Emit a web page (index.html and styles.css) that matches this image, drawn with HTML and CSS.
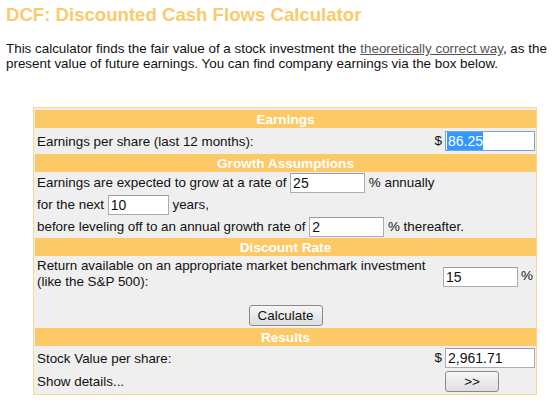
FILE: index.html
```html
<!DOCTYPE html>
<html>
<head>
<meta charset="utf-8">
<title>DCF: Discounted Cash Flows Calculator</title>
<link rel="stylesheet" href="styles.css">
</head>
<body>
<h1 class="title">DCF: Discounted Cash Flows Calculator</h1>
<p class="intro">This calculator finds the fair value of a stock investment the <a class="link" href="#">theoretically correct way</a>, as the present value of future earnings. You can find company earnings via the box below.</p>

<table class="calc">
  <tr class="hrow"><th colspan="2" class="hdr">Earnings</th></tr>
  <tr class="row-eps">
    <td class="label">Earnings per share (last 12 months):</td>
    <td class="val"><span class="cur">$</span><span class="inp inp-wide focused"><span class="sel">86.25</span></span></td>
  </tr>
  <tr class="hrow"><th colspan="2" class="hdr">Growth Assumptions</th></tr>
  <tr class="row-g">
    <td colspan="2" class="label">Earnings are expected to grow at a rate of <input class="inp inp-mid" value="25"> % annually</td>
  </tr>
  <tr class="row-g">
    <td colspan="2" class="label">for the next <input class="inp inp-small" value="10"> years,</td>
  </tr>
  <tr class="row-g">
    <td colspan="2" class="label">before leveling off to an annual growth rate of <input class="inp inp-mid" value="2"> % thereafter.</td>
  </tr>
  <tr class="hrow"><th colspan="2" class="hdr">Discount Rate</th></tr>
  <tr class="row-ret">
    <td class="label label-top">Return available on an appropriate market benchmark investment (like the S&amp;P 500):</td>
    <td class="val"><input class="inp inp-mid" value="15"><span class="pct">%</span></td>
  </tr>
  <tr class="row-btn">
    <td colspan="2" class="center"><button class="btn btn-calc">Calculate</button></td>
  </tr>
  <tr class="hrow"><th colspan="2" class="hdr">Results</th></tr>
  <tr class="row-res">
    <td class="label">Stock Value per share:</td>
    <td class="val"><span class="cur">$</span><input class="inp inp-wide" value="2,961.71"></td>
  </tr>
  <tr class="row-det">
    <td class="label">Show details...</td>
    <td class="val"><span class="btn-box"><button class="btn btn-more">&gt;&gt;</button></span></td>
  </tr>
</table>
</body>
</html>
```
FILE: styles.css
```css
html, body {
  margin: 0;
  padding: 0;
  background: #ffffff;
}
body {
  padding: 4px 6px;
  font-family: "Liberation Sans", Arial, sans-serif;
  font-size: 13.4px;
  color: #111;
}
.title {
  margin: 0;
  font-size: 18.6px;
  font-weight: bold;
  color: #f9cb6c;
  line-height: 22px;
}
.intro {
  margin: 15px 0 0 0;
  line-height: 15px;
}
.link {
  color: #555;
  text-decoration: underline;
}
.calc {
  margin: 36px 0 0 27px;
  width: 504px;
  border: 1px solid #f6d98e;
  background: #efefef;
  border-collapse: separate;
  border-spacing: 0;
  padding: 2px 0 1px 1px;
}
.calc td, .calc th {
  padding: 0 2px;
}
.hdr {
  background: #fdc967;
  color: #ffffff;
  font-weight: bold;
  text-align: center;
  height: 18px;
  line-height: 15px;
  font-size: 13.6px;
}
.label {
  text-align: left;
  white-space: nowrap;
}
.label-top {
  white-space: normal;
  vertical-align: top;
  line-height: 16px;
}
.val {
  text-align: right;
  white-space: nowrap;
  width: 97px;
  padding-right: 1px !important;
}
.center {
  text-align: center;
}
.row-eps td { height: 26px; }
.row-g td { height: 22px; }
.row-ret td { height: 41px; }
.row-ret td.label-top { height: 39px; padding-top: 2px; }
.row-btn td { height: 29px; vertical-align: bottom; padding-bottom: 2px; }
.row-res td { height: 24px; }
.row-det td { height: 23px; }
.cur {
  margin-right: 3px;
}
.pct {
  margin-left: 3px;
  margin-right: 2px;
}
.inp {
  display: inline-block;
  font-family: "Liberation Sans", Arial, sans-serif;
  font-size: 14px;
  line-height: 18px;
  height: 20px;
  box-sizing: border-box;
  border: 1px solid #abadb3;
  border-top-color: #9a9ca3;
  background: #fff;
  padding: 0 2px;
  margin: 0;
  color: #111;
  vertical-align: middle;
  text-align: left;
}
.inp-wide { width: 90px; }
.inp-mid { width: 75px; }
.inp-small { width: 61px; }
.focused {
  border-color: #7da2ce;
  padding-left: 1px;
}
.sel {
  background: #3399ff;
  color: #ffffff;
  padding: 1px 0 1px 1px;
}
.btn-box {
  display: inline-block;
  width: 90px;
  text-align: left;
}
.btn {
  font-family: "Liberation Sans", Arial, sans-serif;
  font-size: 13.4px;
  height: 21px;
  box-sizing: border-box;
  border: 1px solid #8a8a8a;
  border-radius: 3px;
  background: linear-gradient(#f6f6f6, #dedede);
  color: #111;
  padding: 0 4px;
  vertical-align: middle;
}
.btn-calc { width: 74px; }
.btn-more { width: 54px; }
```
